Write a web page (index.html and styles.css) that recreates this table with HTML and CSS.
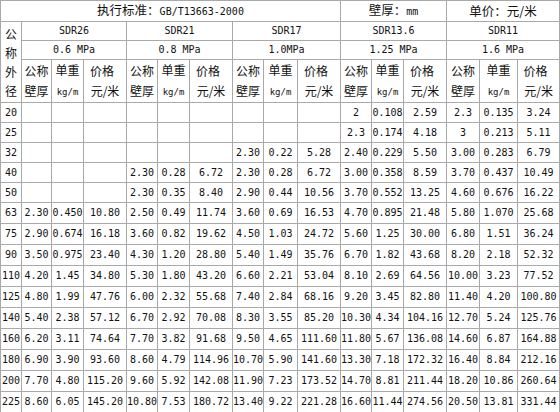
FILE: index.html
```html
<!DOCTYPE html>
<html>
<head>
<meta charset="utf-8">
<link rel="stylesheet" href="styles.css">
</head>
<body>
<table class="grid">
<colgroup>
<col class="c21"><col class="c30"><col class="c32"><col class="c43">
<col class="c31"><col class="c32"><col class="c43">
<col class="c31"><col class="c34"><col class="c43">
<col class="c31"><col class="c32"><col class="c43">
<col class="c33"><col class="c38"><col class="c42">
</colgroup>
<tbody>
<tr class="r-title">
<td colspan="10" class="cn">执行标准：<span class="mono">GB/T13663-2000</span></td>
<td colspan="3" class="cn">壁厚：<span class="mono sm">mm</span></td>
<td colspan="3" class="cn">单价：元/米</td>
</tr>
<tr class="r-sdr">
<td rowspan="3" class="cn vert">公<br>称<br>外<br>径</td>
<td colspan="3" class="mono">SDR26</td>
<td colspan="3" class="mono">SDR21</td>
<td colspan="3" class="mono">SDR17</td>
<td colspan="3" class="mono">SDR13.6</td>
<td colspan="3" class="mono">SDR11</td>
</tr>
<tr class="r-sdr">
<td colspan="3" class="mono">0.6 MPa</td>
<td colspan="3" class="mono">0.8 MPa</td>
<td colspan="3" class="mono">1.0MPa</td>
<td colspan="3" class="mono">1.25 MPa</td>
<td colspan="3" class="mono">1.6 MPa</td>
</tr>
<tr class="r-head">
<td class="cn">公称<br>壁厚</td><td class="cn">单重<br><span class="mono sm">kg/m</span></td><td class="cn"><span class="lft">价格</span><br>元/米</td>
<td class="cn">公称<br>壁厚</td><td class="cn">单重<br><span class="mono sm">kg/m</span></td><td class="cn"><span class="lft">价格</span><br>元/米</td>
<td class="cn">公称<br>壁厚</td><td class="cn">单重<br><span class="mono sm">kg/m</span></td><td class="cn"><span class="lft">价格</span><br>元/米</td>
<td class="cn">公称<br>壁厚</td><td class="cn">单重<br><span class="mono sm">kg/m</span></td><td class="cn"><span class="lft">价格</span><br>元/米</td>
<td class="cn">公称<br>壁厚</td><td class="cn">单重<br><span class="mono sm">kg/m</span></td><td class="cn"><span class="lft">价格</span><br>元/米</td>
</tr>
<tr class="r-a"><td class="lab">20</td><td></td><td></td><td></td><td></td><td></td><td></td><td></td><td></td><td></td><td>2</td><td>0.108</td><td>2.59</td><td>2.3</td><td>0.135</td><td>3.24</td></tr>
<tr class="r-a"><td class="lab">25</td><td></td><td></td><td></td><td></td><td></td><td></td><td></td><td></td><td></td><td>2.3</td><td>0.174</td><td>4.18</td><td>3</td><td>0.213</td><td>5.11</td></tr>
<tr class="r-a"><td class="lab">32</td><td></td><td></td><td></td><td></td><td></td><td></td><td>2.30</td><td>0.22</td><td>5.28</td><td>2.40</td><td>0.229</td><td>5.50</td><td>3.00</td><td>0.283</td><td>6.79</td></tr>
<tr class="r-a"><td class="lab">40</td><td></td><td></td><td></td><td>2.30</td><td>0.28</td><td>6.72</td><td>2.30</td><td>0.28</td><td>6.72</td><td>3.00</td><td>0.358</td><td>8.59</td><td>3.70</td><td>0.437</td><td>10.49</td></tr>
<tr class="r-a"><td class="lab">50</td><td></td><td></td><td></td><td>2.30</td><td>0.35</td><td>8.40</td><td>2.90</td><td>0.44</td><td>10.56</td><td>3.70</td><td>0.552</td><td>13.25</td><td>4.60</td><td>0.676</td><td>16.22</td></tr>
<tr class="r-b"><td class="lab">63</td><td>2.30</td><td>0.450</td><td>10.80</td><td>2.50</td><td>0.49</td><td>11.74</td><td>3.60</td><td>0.69</td><td>16.53</td><td>4.70</td><td>0.895</td><td>21.48</td><td>5.80</td><td>1.070</td><td>25.68</td></tr>
<tr class="r-b"><td class="lab">75</td><td>2.90</td><td>0.674</td><td>16.18</td><td>3.60</td><td>0.82</td><td>19.62</td><td>4.50</td><td>1.03</td><td>24.72</td><td>5.60</td><td>1.25</td><td>30.00</td><td>6.80</td><td>1.51</td><td>36.24</td></tr>
<tr class="r-b"><td class="lab">90</td><td>3.50</td><td>0.975</td><td>23.40</td><td>4.30</td><td>1.20</td><td>28.80</td><td>5.40</td><td>1.49</td><td>35.76</td><td>6.70</td><td>1.82</td><td>43.68</td><td>8.20</td><td>2.18</td><td>52.32</td></tr>
<tr class="r-b"><td class="lab">110</td><td>4.20</td><td>1.45</td><td>34.80</td><td>5.30</td><td>1.80</td><td>43.20</td><td>6.60</td><td>2.21</td><td>53.04</td><td>8.10</td><td>2.69</td><td>64.56</td><td>10.00</td><td>3.23</td><td>77.52</td></tr>
<tr class="r-b"><td class="lab">125</td><td>4.80</td><td>1.99</td><td>47.76</td><td>6.00</td><td>2.32</td><td>55.68</td><td>7.40</td><td>2.84</td><td>68.16</td><td>9.20</td><td>3.45</td><td>82.80</td><td>11.40</td><td>4.20</td><td>100.80</td></tr>
<tr class="r-b"><td class="lab">140</td><td>5.40</td><td>2.38</td><td>57.12</td><td>6.70</td><td>2.92</td><td>70.08</td><td>8.30</td><td>3.55</td><td>85.20</td><td>10.30</td><td>4.34</td><td>104.16</td><td>12.70</td><td>5.24</td><td>125.76</td></tr>
<tr class="r-b"><td class="lab">160</td><td>6.20</td><td>3.11</td><td>74.64</td><td>7.70</td><td>3.82</td><td>91.68</td><td>9.50</td><td>4.65</td><td>111.60</td><td>11.80</td><td>5.67</td><td>136.08</td><td>14.60</td><td>6.87</td><td>164.88</td></tr>
<tr class="r-b"><td class="lab">180</td><td>6.90</td><td>3.90</td><td>93.60</td><td>8.60</td><td>4.79</td><td>114.96</td><td>10.70</td><td>5.90</td><td>141.60</td><td>13.30</td><td>7.18</td><td>172.32</td><td>16.40</td><td>8.84</td><td>212.16</td></tr>
<tr class="r-b"><td class="lab">200</td><td>7.70</td><td>4.80</td><td>115.20</td><td>9.60</td><td>5.92</td><td>142.08</td><td>11.90</td><td>7.23</td><td>173.52</td><td>14.70</td><td>8.81</td><td>211.44</td><td>18.20</td><td>10.86</td><td>260.64</td></tr>
<tr class="r-b"><td class="lab">225</td><td>8.60</td><td>6.05</td><td>145.20</td><td>10.80</td><td>7.53</td><td>180.72</td><td>13.40</td><td>9.22</td><td>221.28</td><td>16.60</td><td>11.44</td><td>274.56</td><td>20.50</td><td>13.81</td><td>331.44</td></tr>
</tbody>
</table>
</body>
</html>
```
FILE: styles.css
```css
html, body {
  margin: 0;
  padding: 0;
  background: #ffffff;
}
body {
  overflow: hidden;
}
.grid {
  border-collapse: collapse;
  table-layout: fixed;
  width: 560px;
  font-family: "DejaVu Sans Mono", "Liberation Mono", monospace;
  font-size: 10px;
  color: #111;
}
.c21 { width: 21px; }
.c30 { width: 30px; }
.c31 { width: 31px; }
.c32 { width: 32px; }
.c33 { width: 33px; }
.c34 { width: 34px; }
.c38 { width: 38px; }
.c42 { width: 42px; }
.c43 { width: 43px; }
.grid td {
  border: 1px solid #a9a9a9;
  padding: 0;
  text-align: center;
  vertical-align: middle;
  white-space: nowrap;
  overflow: hidden;
  line-height: 12px;
}
.cn {
  font-family: "Noto Sans CJK SC", "Noto Sans CJK TC", sans-serif;
  font-size: 12px;
}
.mono {
  font-family: "DejaVu Sans Mono", "Liberation Mono", monospace;
  font-size: 10px;
}
.sm {
  font-size: 9px;
}
.r-title td {
  height: 20px;
  font-size: 12.5px;
}
.r-title .mono {
  font-size: 10px;
}
.r-sdr td {
  height: 18px;
}
.r-head td {
  height: 42px;
  line-height: 20px;
}
.vert {
  line-height: 19px !important;
}
.lft {
  position: relative;
  left: -3px;
}
.r-a td {
  height: 19px;
}
.r-b td {
  height: 20px;
}
.lab {
  font-size: 10px;
}
```
